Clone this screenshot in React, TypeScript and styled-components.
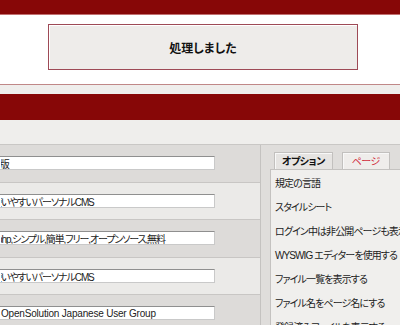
import React from "react";
import styled, { createGlobalStyle } from "styled-components";

const GlobalStyle = createGlobalStyle`
  html, body { margin: 0; padding: 0; background: #ffffff; overflow: hidden; }
  body { font-family: "Liberation Sans", "Noto Sans CJK JP", sans-serif; color: #222; }
`;

const Page = styled.div`
  width: 400px;
  height: 325px;
  overflow: hidden;
  font-feature-settings: "palt";
`;

const TopBar = styled.div`
  height: 14px;
  background: #870707;
  border-bottom: 1px solid #c27070;
`;

const NoticeArea = styled.div`
  background: #ffffff;
  padding: 9px 0 14px 48px;
  border-bottom: 1px solid #c08888;
`;

const NoticeBox = styled.div`
  width: 308px;
  height: 44px;
  border: 1px solid #9e4a56;
  box-shadow: inset 1px 1px 0 #ffffff;
  background: #eeecea;
  display: flex;
  align-items: center;
  justify-content: center;
  font-family: "Noto Sans CJK JP", sans-serif;
  font-size: 12px;
  font-weight: bold;
  color: #111;
`;

const GreyBand = styled.div<{ h: number }>`
  height: ${(p) => p.h}px;
  background: #efeeec;
`;

const RedBar = styled.div`
  height: 26px;
  background: #870707;
`;

const Main = styled.div`
  display: grid;
  grid-template-columns: 261px 1fr;
  border-top: 1px solid #c9c7c5;
`;

const LeftCol = styled.div`
  border-right: 1px solid #c4c2c0;
  display: flex;
  flex-direction: column;
`;

const Row = styled.div<{ alt: boolean; h: number }>`
  height: ${(p) => p.h}px;
  box-sizing: border-box;
  background: ${(p) => (p.alt ? "#ebeae8" : "#dddbd9")};
  border-bottom: 1px solid #c8c6c4;
  padding-top: 11px;
  overflow: hidden;
`;

const Field = styled.input<{ shift: number; tight: boolean }>`
  display: block;
  margin-left: -3px;
  width: 218px;
  height: 14px;
  box-sizing: border-box;
  border: 1px solid #8f8f8f;
  border-right-color: #c9c9c9;
  border-bottom-color: #c9c9c9;
  background: #ffffff;
  padding: 0 3px;
  font-family: "Liberation Sans", "Noto Sans CJK JP", sans-serif;
  font-feature-settings: "palt";
  font-size: 10px;
  letter-spacing: ${(p) => (p.tight ? "-1.1px" : "-0.2px")};
  line-height: 12px;
  color: #222;
  text-indent: ${(p) => p.shift}px;
  outline: none;
`;

const RightCol = styled.div`
  background: #dfdddb;
  padding: 7px 0 0 9px;
  display: flex;
  flex-direction: column;
`;

const Tabs = styled.div`
  display: flex;
  gap: 9px;
  padding-left: 4px;
`;

const Tab = styled.div<{ active: boolean }>`
  height: 17px;
  box-sizing: border-box;
  padding: 0 ${(p) => (p.active ? 7 : 9)}px;
  border: 1px solid #c2c0be;
  border-bottom: none;
  background: ${(p) => (p.active ? "#e6e4e2" : "#efedeb")};
  box-shadow: inset 1px 1px 0 #f8f8f8;
  color: ${(p) => (p.active ? "#111" : "#d02a3a")};
  font-family: "Noto Sans CJK JP", sans-serif;
  font-weight: ${(p) => (p.active ? "bold" : "normal")};
  font-size: 10px;
  letter-spacing: -0.5px;
  line-height: 16px;
`;

const Panel = styled.div`
  background: #f0efed;
  border-left: 1px solid #c4c2c0;
  border-top: 1px solid #c4c2c0;
  display: flex;
  flex-direction: column;
  min-height: 160px;
`;

const Item = styled.div`
  height: 24px;
  display: flex;
  align-items: center;
  padding-left: 4px;
  font-size: 10px;
  letter-spacing: -0.9px;
  white-space: nowrap;
  color: #222;
`;

const rows = [
  { value: "日本語版", shift: -28, tight: true },
  { value: "使いやすいパーソナルCMS", shift: -9, tight: true },
  { value: "php,シンプル,簡単,フリー,オープンソース,無料", shift: -4, tight: true },
  { value: "使いやすいパーソナルCMS", shift: -9, tight: true },
  { value: "OpenSolution Japanese User Group", shift: 0, tight: false },
];

const heights = [38, 37, 38, 37, 40];

const items = [
  "規定の言語",
  "スタイルシート",
  "ログイン中は非公開ページも表示",
  "WYSWIG エディターを使用する",
  "ファイル一覧を表示する",
  "ファイル名をページ名にする",
  "登録済みファイルを表示する",
];

export default function App() {
  return (
    <Page>
      <GlobalStyle />
      <TopBar />
      <NoticeArea>
        <NoticeBox>処理しました</NoticeBox>
      </NoticeArea>
      <GreyBand h={9} />
      <RedBar />
      <GreyBand h={24} />
      <Main>
        <LeftCol>
          {rows.map((r, i) => (
            <Row key={i} alt={i % 2 === 1} h={heights[i]}>
              <Field shift={r.shift} tight={r.tight} readOnly defaultValue={r.value} />
            </Row>
          ))}
        </LeftCol>
        <RightCol>
          <Tabs>
            <Tab active>オプション</Tab>
            <Tab active={false}>ページ</Tab>
          </Tabs>
          <Panel>
            {items.map((t) => (
              <Item key={t}>{t}</Item>
            ))}
          </Panel>
        </RightCol>
      </Main>
    </Page>
  );
}
